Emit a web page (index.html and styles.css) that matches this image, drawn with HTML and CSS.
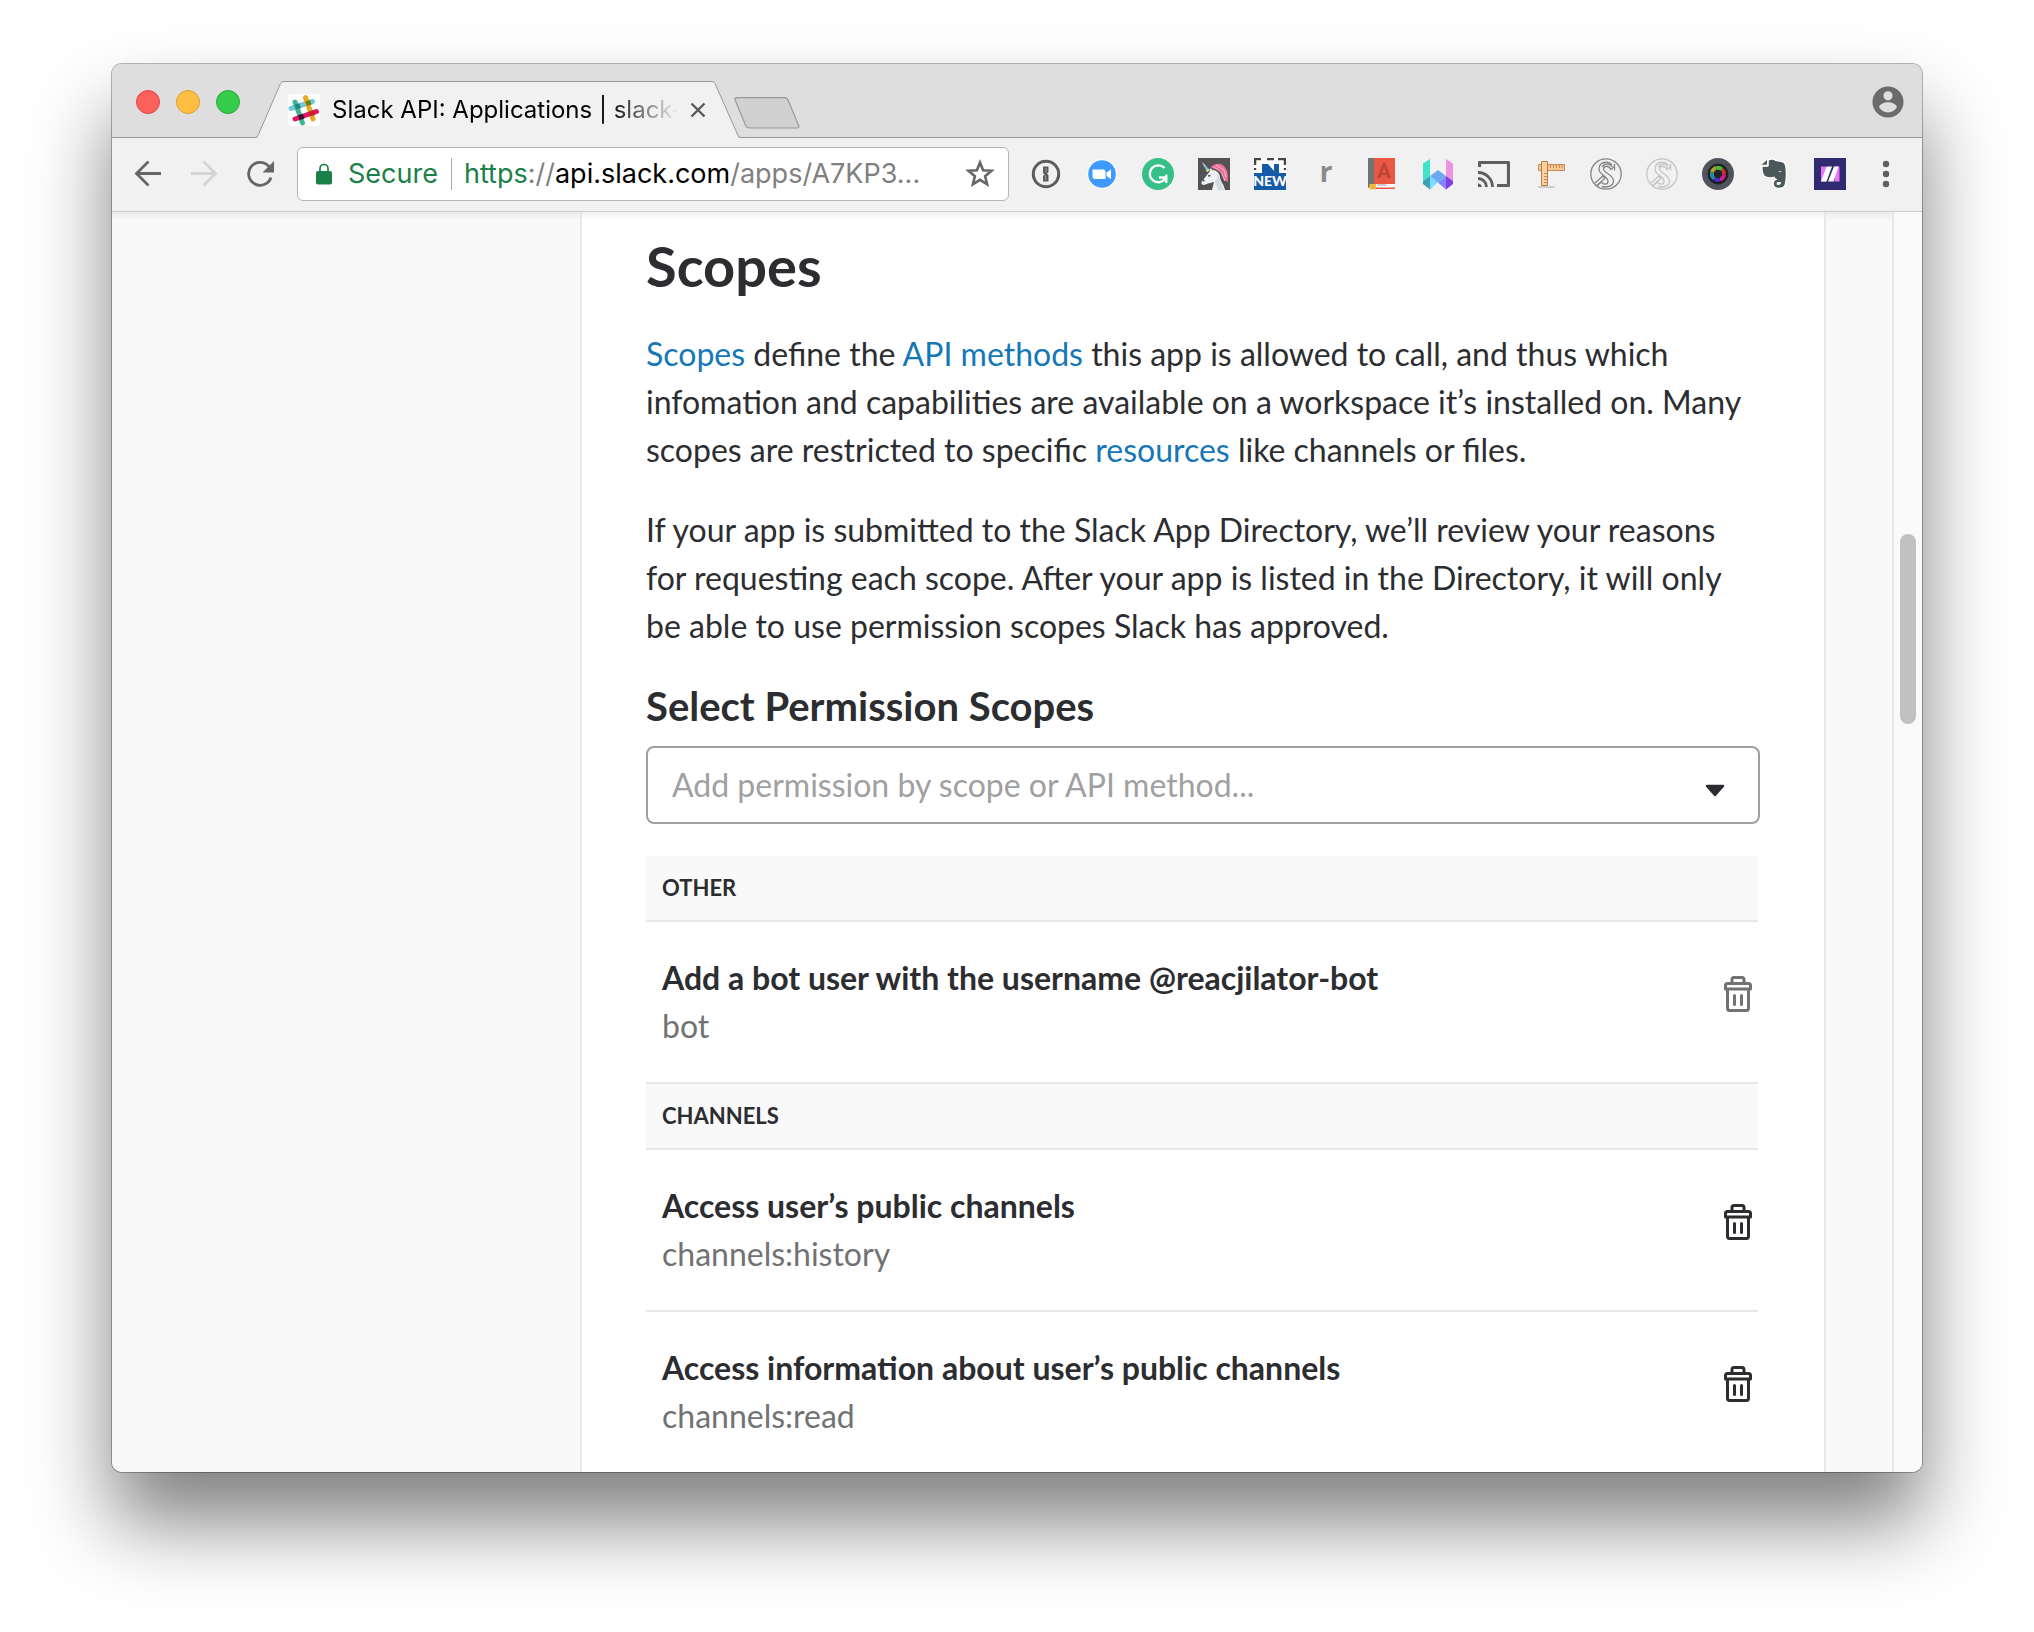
FILE: index.html
```html
<!DOCTYPE html>
<html lang="en">
<head>
<meta charset="utf-8">
<title>Slack API: Applications | slack-</title>
<link rel="stylesheet" href="styles.css">
</head>
<body>
<svg class="defs" width="0" height="0" aria-hidden="true">
  <symbol id="trash" viewBox="0 0 32 40">
    <g fill="none" stroke="currentColor" stroke-width="3" stroke-linejoin="round" stroke-linecap="round">
      <path d="M10 8V5.500q0-2 2-2h8q2 0 2 2V8"/>
      <path d="M3.500 15v-3.500q0-2 2-2h21q2 0 2 2V15z"/>
      <path d="M5.500 16v18q0 2.500 2 2.500h17q2 0 2-2.500V16"/>
      <path d="M12.500 21.500v9M19.500 21.500v9"/>
    </g>
  </symbol>
  <symbol id="swirl" viewBox="0 0 32 32">
    <g fill="none" stroke="currentColor" stroke-width="1.300">
      <circle cx="16" cy="16" r="15.200"/>
      <path d="M24.500 8.500 21 11.500C18.500 7 13.500 7.500 13.500 11c0 4 10 5.500 10 12 0 5-6 7-11.500 5.500"/>
      <path d="M22 7C18 2 9 4 9 11c0 6 9 7 9 12.500 0 3.500-4.500 3.500-7 .5L6 28"/>
      <path d="M24.500 6v6.500M12 9c3-5 9-3 10 0M5 25l8-7 2 2-8 8"/>
    </g>
  </symbol>
</svg>

<div class="window">
  <header class="tabstrip">
    <div class="lights">
      <button class="light light-close" aria-label="Close window"></button>
      <button class="light light-min" aria-label="Minimize window"></button>
      <button class="light light-max" aria-label="Zoom window"></button>
    </div>
    <div class="tab">
      <svg class="tab-edge" width="28" height="57" viewBox="0 0 28 57"><path d="M0 57q1 0 1.500-1.500L24.500 2.500Q25.500.500 28 .500V57z" fill="#f1f1f1"/><path d="M0 56.500q1 0 2-2L24.500 2.500Q25.500.500 28 .500" fill="none" stroke="#999"/></svg>
      <div class="tab-body">
        <svg class="favicon" width="32" height="32" viewBox="0 0 32 32">
          <rect width="32" height="32" rx="3" fill="#fff"/>
          <g fill="none" stroke-width="5" stroke-linecap="round">
            <path d="M3 14.500 24.500 7.500" stroke="#70cadb"/>
            <path d="M7 8 14.500 29" stroke="#3eb890"/>
            <path d="M17.500 3.500 25 25" stroke="#e9a820"/>
            <path d="M7 25 28.500 17.500" stroke="#e01563"/>
          </g>
          <path d="m6.500 10.800 4.800-1.600 1.700 4.800-4.700 1.600z" fill="#1f8a7c"/>
          <path d="m17.200 7.400 4.800-1.500 1.600 4.700-4.700 1.600z" fill="#6d8413"/>
          <path d="m10 21.300 4.800-1.600 1.600 4.700-4.700 1.600z" fill="#361238"/>
          <path d="m20.800 17.600 4.700-1.600 1.700 4.700-4.700 1.600z" fill="#cc2027"/>
        </svg>
        <span class="tab-title">Slack API: Applications | slack-</span>
        <button class="tab-close" aria-label="Close tab"><svg width="16" height="16" viewBox="0 0 16 16"><path d="m1.500 1.500 13 13m0-13-13 13" stroke="#5a5a5a" stroke-width="2.400"/></svg></button>
      </div>
      <svg class="tab-edge" width="28" height="57" viewBox="0 0 28 57"><path d="M0 .500Q2 .500 3 2.500L26 55q.600 2 2 2H0z" fill="#f1f1f1"/><path d="M0 .500Q2 .500 3 2.500L26 54.500q1 2 2 2" fill="none" stroke="#999"/></svg>
    </div>
    <button class="newtab" aria-label="New tab"><svg width="66" height="32" viewBox="0 0 66 32"><path d="M3 .700h47q3 0 4.200 2.600l10.300 25q1.300 2.700-1.500 2.700H16q-3 0-4.200-2.300L1.300 3.500Q0 .700 3 .700z" fill="#d0d0d0" stroke="#999" stroke-width="1.200"/></svg></button>
    <button class="profile" aria-label="Profile"><svg width="32" height="32" viewBox="0 0 32 32"><circle cx="16" cy="16" r="15.500" fill="#6b6b6b"/><circle cx="16" cy="9.800" r="4.600" fill="#dedede"/><path d="M7 21c1-3.200 5.500-4.800 9-4.800s8 1.600 9 4.800c-2 3.500-5 5.400-9 5.400s-7-1.900-9-5.400z" fill="#dedede"/></svg></button>
  </header>

  <div class="toolbar">
    <nav class="tools" aria-label="History">
      <button aria-label="Back"><svg width="32" height="32" viewBox="0 0 32 32"><path d="M29 15.500H5M16.500 3.500l-12 12 12 12" fill="none" stroke="#666" stroke-width="2.800"/></svg></button>
      <button aria-label="Forward"><svg width="32" height="32" viewBox="0 0 32 32"><path d="M3 15.500h24M15.500 3.500l12 12-12 12" fill="none" stroke="#d4d4d4" stroke-width="2.800"/></svg></button>
      <button aria-label="Reload"><svg width="32" height="32" viewBox="0 0 32 32"><path d="M27 19.500a11.500 11.500 0 1 1-2-11" fill="none" stroke="#666" stroke-width="2.800"/><path d="M30 3v11.500H18.500z" fill="#666"/></svg></button>
    </nav>
    <div class="omnibox">
      <svg width="16" height="22" viewBox="0 0 16 22"><rect y="8" width="16" height="13.500" rx="2" fill="#1a8048"/><path d="M4 9V5.500a4 4 0 0 1 8 0V9" fill="none" stroke="#1a8048" stroke-width="1.700"/></svg>
      <span class="secure">Secure</span>
      <span class="divider"></span>
      <div class="url" role="textbox" contenteditable="true" spellcheck="false" aria-label="Address"><span class="green">https</span>://<span class="host">api.slack.com</span>/apps/A7KP3...</div>
      <button class="star" aria-label="Bookmark"><svg width="30" height="30" viewBox="0 0 30 30"><path d="m15 3.500 3.100 7.700 8.400.600-6.400 5.400 2 8.100-7.100-4.400-7.100 4.400 2-8.100-6.400-5.400 8.400-.600z" fill="none" stroke="#666" stroke-width="2.600"/></svg></button>
    </div>
    <div class="tools">
      <button aria-label="Password manager"><svg width="32" height="32" viewBox="0 0 32 32"><circle cx="16" cy="16" r="12.700" fill="none" stroke="#5c5c5c" stroke-width="3"/><path d="M13 8.500h5.500V14l-1.500 1.500 1.500 1.500v6.500H13V18l1.500-1.500L13 15z" fill="#5c5c5c"/><path d="M16 10v4.500M15.500 17.500V22" stroke="#999" stroke-width="1"/></svg></button>
      <button aria-label="Video calls"><svg width="32" height="32" viewBox="0 0 32 32"><circle cx="16" cy="16" r="14.800" fill="#fff"/><circle cx="16" cy="16" r="13.800" fill="#4099fc"/><path d="M6.500 11.500H17q2.500 0 2.500 2.500v7H9q-2.500 0-2.500-2.500zM20.500 14.500l4.500-3v9.500l-4.500-3z" fill="#fff"/></svg></button>
      <button aria-label="Grammar checker"><svg width="32" height="32" viewBox="0 0 32 32"><circle cx="16" cy="16" r="16" fill="#36bf86"/><path d="M22.500 10A8.500 8.500 0 1 0 23 21M17 19.500h7.300M24.300 16.500V25" fill="none" stroke="#fff" stroke-width="2.300"/></svg></button>
      <button aria-label="Unicorn"><svg width="32" height="32" viewBox="0 0 32 32"><path fill="#535353" d="M0 0h32v32H0z"/><path d="M13 9c5-5 12-4 15 2 3 6 1 7 2 13l-4-2-3-9-9-3z" fill="#f2709c"/><path d="m16 9 7 5 4 9M18 7l8 5 2 7" stroke="#f9b9c9" fill="none"/><path d="M12 13l.5-3 2 2c4 0 7 3 7.500 7 .5 5 4 7 5 13H14l2-8-6 1.500-4 1.500q-3 0-2.500-3z" fill="#edf0f4"/><path d="m20 16 3 8 3 8h-6l-3-9 2-3z" fill="#d5dbe2"/><path d="m4 4 5 10 3-2z" fill="#71c6e8"/><path d="m4 4 2.500 5 1.500-1z" fill="#d7b7ee"/><path d="m8 12 1 2 3-2-1-1z" fill="#f7d75d"/><path d="m10 18 2.500-.5M4.500 22l2 1" stroke="#555" stroke-width="1.500"/></svg></button>
      <button aria-label="New features"><svg width="32" height="32" viewBox="0 0 32 32"><path fill="#fff" d="M0 0h32v32H0z"/><path d="M0 15h8V6h6l6 7V6h5v9h7v17H0z" fill="#165ba7"/><path d="M0 1h9M13 1h8M24 1h8M1 0v12M31 0v12" stroke="#444" stroke-width="2.500" stroke-dasharray="7 3"/><text x="16" y="28" text-anchor="middle" class="new-text">NEW</text></svg></button>
      <button aria-label="Reader"><svg width="32" height="32" viewBox="0 0 32 32"><text x="16" y="24" text-anchor="middle" class="r-text">r</text></svg></button>
      <button aria-label="Dictionary"><svg width="32" height="32" viewBox="0 0 32 32"><path fill="#e95845" d="M2 0h27v26H2z"/><path fill="#6e7478" d="M2 0h6v27l-6 3z"/><path fill="#fff" d="M5 26h24v4H5z"/><path fill="#c5c9cc" d="M11 26h8l3 2H11z"/><path fill="#e95845" d="M5 29.500h24V31H5z"/><path fill="#eebc38" d="M3.500 26H10v6l-3-2-3.500 2z"/><text x="18" y="20" text-anchor="middle" class="a-text">A</text></svg></button>
      <button aria-label="Writer"><svg width="32" height="32" viewBox="0 0 32 32"><path fill="#40e3c8" d="M1 5.500 8 1v17l-7 5z"/><path fill="#ed94e0" d="M24 1l7 4.500V23l-7-5z"/><path fill="#37a3b2" d="M1 23v3l7 5.500V18z"/><path fill="#79dcff" d="m8 18 8 6-8 7.500z"/><path fill="#70a7ef" d="m16 12 8 6-8 6.500L8 18z"/><path fill="#7b87ff" d="m24 18-8 6.500 8 7z"/><path fill="#863de0" d="m24 18 7 5v3l-7 5.500z"/></svg></button>
      <button aria-label="Cast"><svg width="32" height="32" viewBox="0 0 32 32"><path d="M1.500 9V4.500h29v23H19" fill="none" stroke="#5f5f5f" stroke-width="3.200" stroke-linejoin="round"/><path d="M0 25.500A4.500 4.500 0 0 1 4 29H0z" fill="#5f5f5f"/><path d="M0 20.500a8.500 8.500 0 0 1 8.500 8.500M0 14.500A14.500 14.500 0 0 1 14.500 29" fill="none" stroke="#5f5f5f" stroke-width="2.800"/></svg></button>
      <button aria-label="Ruler"><svg width="32" height="32" viewBox="0 0 32 32"><path d="M4 28h18l-3 2H5z" fill="#ccc"/><path fill="#f3c894" stroke="#c98a55" d="M4.500 6.500h26v6h-26z"/><path fill="#f7d3a2" stroke="#b97943" d="M7.500 3.500h6v24h-6z"/><path d="M16.500 7v3m3-3v3m3-3v3m3-3v3m2.500-3v3M10 15.500h3m-3 3h3m-3 3h3m-3 3h3" stroke="#c98a55"/></svg></button>
      <button aria-label="Style"><svg class="swirl" width="32" height="32"><use href="#swirl"/></svg></button>
      <button aria-label="Style, inactive"><svg class="swirl swirl-off" width="32" height="32"><use href="#swirl"/></svg></button>
      <button aria-label="Camera"><svg width="32" height="32" viewBox="0 0 32 32"><circle cx="16" cy="16" r="16" fill="#4f535b"/><circle cx="16" cy="16" r="10.500" fill="#23242a"/><circle cx="16" cy="16" r="8.800" fill="#111"/><g fill="none" stroke-width="4"><path d="M10 14.500A6 6 0 0 1 14 10" stroke="#a9a12a"/><path d="M14 10a6 6 0 0 1 6 1.500" stroke="#4fb636"/><path d="M20 11.500a6 6 0 0 1 2 5" stroke="#c62f2f"/><path d="M22 16.500a6 6 0 0 1-4 5" stroke="#d01f8c"/><path d="M18 21.500a6 6 0 0 1-6-1" stroke="#4a2ad0"/><path d="M12 20.500a6 6 0 0 1-2-6" stroke="#1f8fa5"/></g><circle cx="16" cy="16" r="4" fill="#222"/></svg></button>
      <button aria-label="Notes"><svg width="32" height="32" viewBox="0 0 32 32"><path d="M10.500 2.500c3-1.500 6-.5 7.500.7 3 .3 7 .5 8.300 2.500 2 5 1.700 14 .5 20-.7 3-3 4-6 4s-5-1.500-5-4 1.500-4 4-4c-2-1-3-1.500-3.500-3.200-3.300 1.500-8.300.5-9.800-1-1.500-2-2-6-2-9h5.500z" fill="#4b5759" stroke="#fff" stroke-width="2.500" paint-order="stroke"/><path d="M3.500 7 9 2v4.500z" fill="#4b5759"/><path d="M4 8.200h6.200V2" fill="none" stroke="#fff"/><path d="M20 13.500q2-1.500 3.500.7z" fill="#fff"/><path d="M23 24h-3q-1.500.2-1.500 1.700T20.500 27q2.500 0 2.500-3z" fill="#fff"/></svg></button>
      <button aria-label="Mix"><svg width="32" height="32" viewBox="0 0 32 32"><path fill="#302b70" d="M0 0h32v32H0z"/><path fill="#ee72f5" d="M7 8.500h5v15H7zM20.500 8.500h5v15h-5z"/><path fill="#302b70" d="M12 8.500h8.500v2L16 23.500h-3z"/><path fill="#fff" d="M12.500 8.500h5.500L12.500 23.500H7zM20 8.500h4.500L19.500 23.500H14z"/></svg></button>
      <button aria-label="Menu"><svg width="32" height="32" viewBox="0 0 32 32"><g fill="#5f5f5f"><circle cx="16" cy="6" r="3.200"/><circle cx="16" cy="16" r="3.200"/><circle cx="16" cy="26" r="3.200"/></g></svg></button>
    </div>
  </div>

  <div class="page">
    <main class="card">
      <h1>Scopes</h1>
      <p><a href="#scopes">Scopes</a> define the <a href="#methods">API methods</a> this app is allowed to call, and thus which infomation and capabilities are available on a workspace it’s installed on. Many scopes are restricted to specific <a href="#resources">resources</a> like channels or files.</p>
      <p>If your app is submitted to the Slack App Directory, we’ll review your reasons for requesting each scope. After your app is listed in the Directory, it will only be able to use permission scopes Slack has approved.</p>
      <label for="scope">Select Permission Scopes</label>
      <div class="combo">
        <input id="scope" type="text" placeholder="Add permission by scope or API method...">
        <svg width="22" height="14" viewBox="0 0 22 14"><path d="M3 2h16l-8 9z" fill="#2c2d30" stroke="#2c2d30" stroke-width="2.500" stroke-linejoin="round"/></svg>
      </div>
      <section class="scopes">
        <h2>OTHER</h2>
        <div class="scope">
          <div><h3>Add a bot user with the username @reacjilator-bot</h3><span class="scope-id">bot</span></div>
          <button class="remove remove-off" aria-label="Remove bot"><svg width="32" height="40"><use href="#trash"/></svg></button>
        </div>
        <h2>CHANNELS</h2>
        <div class="scope">
          <div><h3>Access user’s public channels</h3><span class="scope-id">channels:history</span></div>
          <button class="remove" aria-label="Remove channels:history"><svg width="32" height="40"><use href="#trash"/></svg></button>
        </div>
        <div class="scope">
          <div><h3>Access information about user’s public channels</h3><span class="scope-id">channels:read</span></div>
          <button class="remove" aria-label="Remove channels:read"><svg width="32" height="40"><use href="#trash"/></svg></button>
        </div>
      </section>
    </main>
    <div class="scrollbar"><div class="thumb"></div></div>
  </div>
</div>
</body>
</html>
```
FILE: styles.css
```css
* { box-sizing: border-box; }
body {
  margin: 0;
  padding: 64px 112px 160px;
  background: #fff;
  color: #2c2d30;
  font: 32px/48px Lato, sans-serif;
}
button { border: 0; padding: 0; background: none; color: inherit; font: inherit; }
svg { display: block; flex: none; }
.defs { position: absolute; }
h1, h2, h3, p { margin: 0; }

.window {
  border-radius: 10px;
  overflow: hidden;
  background: #f9f9f9;
  box-shadow: 0 0 0 1px rgba(0, 0, 0, .28), 0 50px 80px rgba(0, 0, 0, .5);
}

/* Tab strip */
.tabstrip {
  display: flex;
  align-items: flex-end;
  height: 74px;
  padding: 0 18px 0 24px;
  background: #dedede;
  border-bottom: 1px solid #999;
  font: 24px/32px Inter, sans-serif;
  color: #000;
}
.lights { display: flex; gap: 16px; width: 120px; padding-bottom: 23px; }
.light { width: 24px; height: 24px; border-radius: 50%; border: 1px solid; }
.light-close { background: #fc605b; border-color: #df4744; }
.light-min { background: #fdbe41; border-color: #de9f34; }
.light-max { background: #35cc4b; border-color: #27a934; }
.tab { display: flex; width: 484px; height: 57px; margin-bottom: -1px; }
.tab-body {
  display: flex;
  flex: 1;
  align-items: center;
  gap: 12px;
  min-width: 0;
  padding: 0 6px 0 4px;
  background: #f1f1f1;
  border-top: 1px solid #999;
}
.tab-title {
  flex: 1;
  overflow: hidden;
  white-space: nowrap;
  -webkit-mask-image: linear-gradient(to right, #000 80%, transparent);
  mask-image: linear-gradient(to right, #000 80%, transparent);
}
.newtab { margin: 0 auto 8px -6px; }
.profile { margin-bottom: 19px; }

/* Toolbar */
.toolbar {
  display: flex;
  align-items: center;
  gap: 21px;
  height: 74px;
  padding: 0 20px 2px;
  background: #f1f1f1;
  border-bottom: 1px solid #ccc;
}
.tools { display: flex; gap: 24px; }
.tools button { width: 32px; height: 32px; }
.omnibox {
  display: flex;
  flex: 1;
  align-items: center;
  min-width: 0;
  height: 54px;
  padding: 0 13px 0 18px;
  background: #fff;
  border: 1px solid #b5b5b5;
  border-radius: 6px;
  font: 27px/32px Inter, sans-serif;
  color: #808080;
}
.secure { margin-left: 16px; }
.secure, .green { color: #1a8048; }
.host { color: #000; }
.divider { width: 1px; height: 32px; margin: 0 12px 0 13px; background: #aaa; }
.url { flex: 1; min-width: 0; overflow: hidden; white-space: nowrap; }
.new-text { font: 900 14px Lato, sans-serif; fill: #fff; }
.a-text { font: bold 20px Roboto, sans-serif; fill: #bd4437; }
.r-text { font: bold 28px "Noto Sans", sans-serif; fill: #8a8a8a; }
.swirl { color: #858585; }
.swirl-off { color: #c4c4c4; }

/* Page */
.page {
  display: flex;
  padding-left: 468px;
  background: linear-gradient(rgba(0, 0, 0, .06), transparent 8px) #f9f9f9;
}
.card {
  flex: 1;
  min-width: 0;
  padding: 18px 66px 0 64px;
  background: linear-gradient(rgba(0, 0, 0, .06), transparent 8px) #fff;
  border: solid #e8e8e8;
  border-width: 0 2px;
}
h1 { margin-bottom: 28px; font-size: 56px; line-height: 72px; }
p { margin-bottom: 32px; }
a { color: #1577b8; text-decoration: none; }
label { display: block; margin-bottom: 16px; font-size: 40px; font-weight: bold; }
.combo {
  display: flex;
  align-items: center;
  height: 78px;
  margin-right: -2px;
  padding: 0 32px 0 24px;
  border: 2px solid #a0a0a2;
  border-radius: 8px;
}
.combo svg { margin-top: 12px; }
.combo input { flex: 1; min-width: 0; padding: 0; border: 0; outline: 0; background: none; font: inherit; }
.combo input::placeholder { color: #a0a0a2; opacity: 1; }
.scopes { margin-top: 32px; }
h2 {
  padding: 8px 16px;
  background: #f9f9f9;
  border-bottom: 2px solid #e8e8e8;
  font-size: 22px;
}
.scope {
  display: flex;
  justify-content: space-between;
  align-items: flex-start;
  padding: 32px 4px 32px 16px;
  border-bottom: 2px solid #e8e8e8;
}
.scope:last-child { border-bottom: 0; }
h3 { font-size: 32px; }
.scope-id { display: block; color: #717274; }
.remove { margin-top: 20px; }
.remove-off { color: #717274; }
.scrollbar {
  width: 30px;
  margin-left: 66px;
  padding-left: 6px;
  background: #fafafa;
  border-left: 2px solid #e8e8e8;
}
.thumb { width: 16px; height: 190px; margin-top: 322px; border-radius: 8px; background: #c1c1c1; }
```
